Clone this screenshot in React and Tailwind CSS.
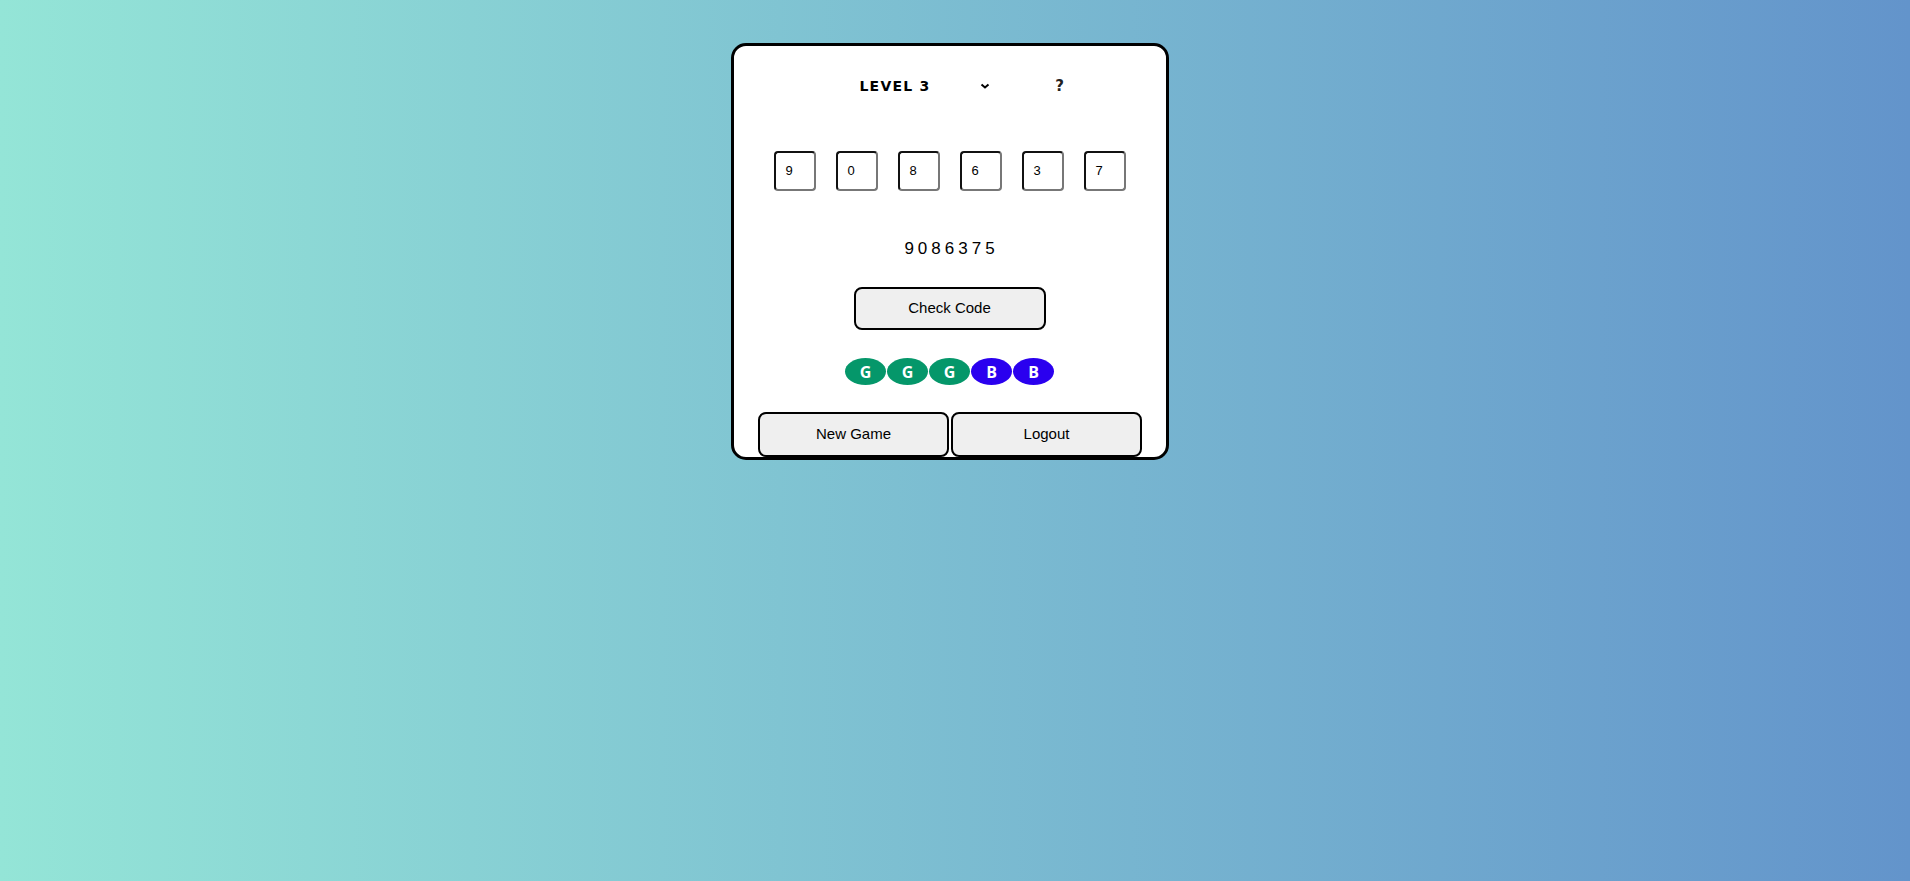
import React from "react";

const digits = ["9", "0", "8", "6", "3", "7"];
const badges = [
  { l: "G", c: "bg-[#05976a]" },
  { l: "G", c: "bg-[#05976a]" },
  { l: "G", c: "bg-[#05976a]" },
  { l: "B", c: "bg-[#2a00ef]" },
  { l: "B", c: "bg-[#2a00ef]" },
];

export default function App() {
  return (
    <div className="w-full h-[881px] bg-[linear-gradient(to_right,#94e5d7,#6394cb)] overflow-hidden">
      <div className="flex justify-center pr-[11px] pt-[43px]">
        <div className="w-[438px] h-[417px] bg-white border-[3px] border-black rounded-[15px] flex flex-col items-center font-['Liberation_Sans',Arial,sans-serif] text-black">
          {/* header */}
          <div className="w-full mt-[29px] h-[24px] flex items-center pl-[126px]">
            <span className="font-['DejaVu_Sans',sans-serif] font-bold text-[14px] tracking-[1.2px] leading-none">
              LEVEL 3
            </span>
            <svg className="ml-[50px]" width="10" height="8" viewBox="0 0 10 8">
              <path d="M1.5 2.5 L5 5.5 L8.5 2.5" fill="none" stroke="#000" strokeWidth="2" />
            </svg>
            <span className="ml-[65px] font-['DejaVu_Sans',sans-serif] font-bold text-[15px] leading-none text-[#222]">
              ?
            </span>
          </div>

          {/* inputs */}
          <div className="mt-[53px] flex gap-[20px]">
            {digits.map((d, i) => (
              <div
                key={i}
                className="w-[42px] h-[40px] rounded-[4px] border-2 border-t-[#111] border-l-[#111] border-r-[#777] border-b-[#777] flex items-center pl-[10px] text-[13px] leading-none"
              >
                {d}
              </div>
            ))}
          </div>

          {/* code */}
          <div className="mt-[46px] h-[24px] leading-[24px] text-[17px] tracking-[4px] pl-[4px] font-light">
            9086375
          </div>

          {/* check */}
          <button className="mt-[26px] w-[192px] h-[46px] bg-[#efefef] border-2 border-black rounded-[8px] text-[15px]">
            Check Code
          </button>

          {/* badges */}
          <div className="mt-[28px] flex gap-px">
            {badges.map((b, i) => (
              <div
                key={i}
                className={`w-[41px] h-[27px] rounded-[50%] ${b.c} flex items-center justify-center text-white font-bold text-[16px] font-['Open_Sans',sans-serif] leading-none`}
              >
                {b.l}
              </div>
            ))}
          </div>

          {/* bottom buttons */}
          <div className="mt-[27px] flex gap-[2px] pl-px">
            <button className="w-[191px] h-[45px] bg-[#efefef] border-2 border-black rounded-[8px] text-[15px]">
              New Game
            </button>
            <button className="w-[191px] h-[45px] bg-[#efefef] border-2 border-black rounded-[8px] text-[15px]">
              Logout
            </button>
          </div>
        </div>
      </div>
    </div>
  );
}
